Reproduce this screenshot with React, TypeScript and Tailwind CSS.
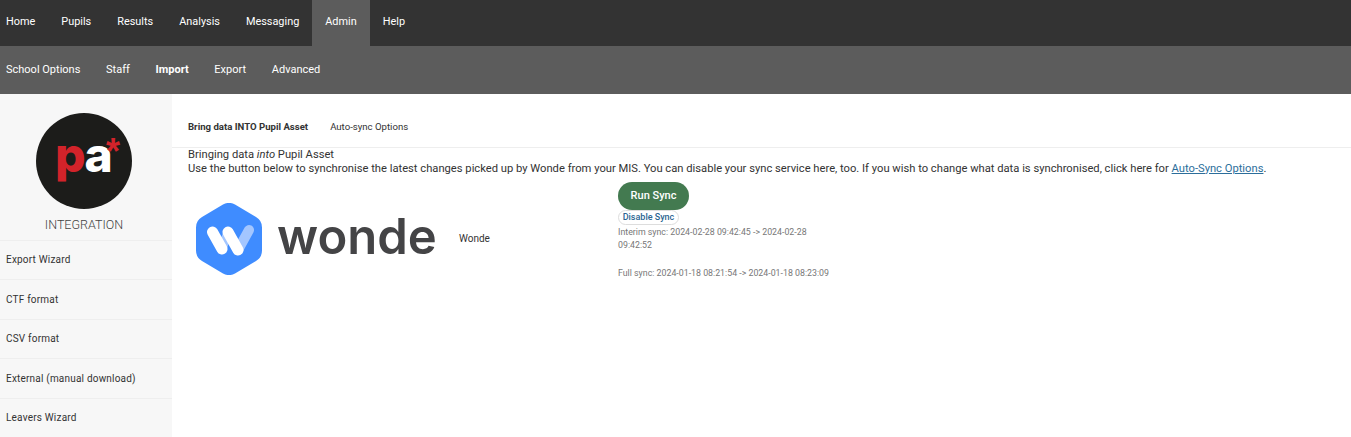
const topItems = ["Home", "Pupils", "Results", "Analysis", "Messaging", "Admin", "Help"];
const subItems = ["School Options", "Staff", "Import", "Export", "Advanced"];
const sideItems = ["Export Wizard", "CTF format", "CSV format", "External (manual download)", "Leavers Wizard"];

function PaLogo() {
  return (
    <div className="relative h-[96px] w-[96px] rounded-full bg-[#1c1c1a]">
      <span className="absolute left-[19px] top-[12px] text-[48px] leading-[60px] font-extrabold tracking-[-1.5px] text-[#d2232a] font-['Inter',sans-serif]">
        p<span className="text-white">a</span>
      </span>
      <span className="absolute left-[70px] top-[21px] h-[20px] text-[36px] leading-[36px] font-bold text-[#d2232a] font-['Liberation_Sans',sans-serif]">
        *
      </span>
    </div>
  );
}

function WondeLogo() {
  return (
    <div className="flex w-[243px] shrink-0 items-center">
      <svg width="66" height="72" viewBox="0 0 66 72" className="shrink-0">
        <path
          d="M27 1.600a12 12 0 0 1 12 0l21 12.400A12 12 0 0 1 66 24.400v23.200a12 12 0 0 1-6 10.400l-21 12.400a12 12 0 0 1-12 0l-21-12.400A12 12 0 0 1 0 47.600V24.400a12 12 0 0 1 6-10.400z"
          fill="#3f8cff"
        />
        <path d="M26 46 L32 29" fill="none" stroke="#a3c6ff" strokeWidth="9" strokeLinecap="round" />
        <path d="M42 47 L53 27" fill="none" stroke="#a3c6ff" strokeWidth="10" strokeLinecap="round" />
        <path d="M16.500 29 L26 46" fill="none" stroke="#fff" strokeWidth="11" strokeLinecap="round" />
        <path d="M32 29 L42 47" fill="none" stroke="#fff" strokeWidth="11" strokeLinecap="round" />
      </svg>
      <span className="ml-[15px] pb-[3px] text-[49px] leading-[60px] font-semibold tracking-[0px] text-[#444446] font-['Inter',sans-serif]">
        wonde
      </span>
    </div>
  );
}

export default function App() {
  return (
    <div className="flex h-[437px] flex-col overflow-hidden bg-white font-['Roboto',sans-serif]">
      <nav className="flex h-[46px] bg-[#333333] text-[10.900px] text-white">
        {topItems.map((item, i) => (
          <div
            key={item}
            className={
              (item === "Admin" ? "bg-[#5c5c5c] " : "") +
              (i === 0 ? "pl-[6px] pr-[13px] " : "px-[13px] ") +
              "flex items-center pb-[1px]"
            }
          >
            {item}
          </div>
        ))}
      </nav>
      <nav className="flex h-[48px] items-center gap-[25.700px] bg-[#5c5c5c] pl-[6px] pt-[1px] text-[11px] text-white">
        {subItems.map((item) => (
          <div key={item} className={item === "Import" ? "font-bold" : ""}>
            {item}
          </div>
        ))}
      </nav>
      <div className="flex flex-1">
        <aside className="w-[172px] shrink-0 bg-[#f7f7f7]">
          <div className="flex flex-col items-center pr-[4px] pt-[19px]">
            <PaLogo />
            <div className="mt-[8px] h-[23px] text-[12.500px] leading-[16px] font-light text-[#444]">INTEGRATION</div>
          </div>
          {sideItems.map((item) => (
            <div
              key={item}
              className="flex h-[39.500px] items-center border-t border-[#eeeeee] pl-[6px] text-[10px] tracking-[0.2px] text-[#333]"
            >
              {item}
            </div>
          ))}
        </aside>
        <main className="flex-1">
          <div className="flex h-[54px] gap-[22px] border-b border-[#eeeeee] pl-[16px] pt-[26px] text-[9.600px] leading-[14px] text-[#333]">
            <span className="font-bold">Bring data INTO Pupil Asset</span>
            <span>Auto-sync Options</span>
          </div>
          <div className="pl-[16px] text-[11.200px] leading-[14px] text-[#333]">
            <div>
              Bringing data <em>into</em> Pupil Asset
            </div>
            <div>
              Use the button below to synchronise the latest changes picked up by Wonde from your MIS. You can disable
              your sync service here, too. If you wish to change what data is synchronised, click here for{" "}
              <a className="text-[#2c6e9b] underline">Auto-Sync Options</a>.
            </div>
          </div>
          <div className="mt-[6px] flex">
            <div className="flex w-[287px] shrink-0 items-center self-start pl-[24px] pt-[21px]">
              <WondeLogo />
              <span className="ml-[20px] text-[10px] text-[#333]">Wonde</span>
            </div>
            <div className="ml-[159px] w-[200px]">
              <div className="flex h-[28px] w-[71px] items-center justify-center rounded-full bg-[#437a50] pt-px text-[11px] font-medium text-white">
                Run Sync
              </div>
              <div className="flex h-[15px] w-[61px] items-center justify-center rounded-full border border-[#dddddd] pt-px text-[9px] font-medium text-[#2c6592]">
                Disable Sync
              </div>
              <div className="pt-px text-[8.800px] leading-[13px] text-[#777]">
                <div>Interim sync: 2024-02-28 09:42:45 -&gt; 2024-02-28 09:42:52</div>
                <div className="mt-[15px] whitespace-nowrap">Full sync: 2024-01-18 08:21:54 -&gt; 2024-01-18 08:23:09</div>
              </div>
            </div>
          </div>
        </main>
      </div>
    </div>
  );
}
